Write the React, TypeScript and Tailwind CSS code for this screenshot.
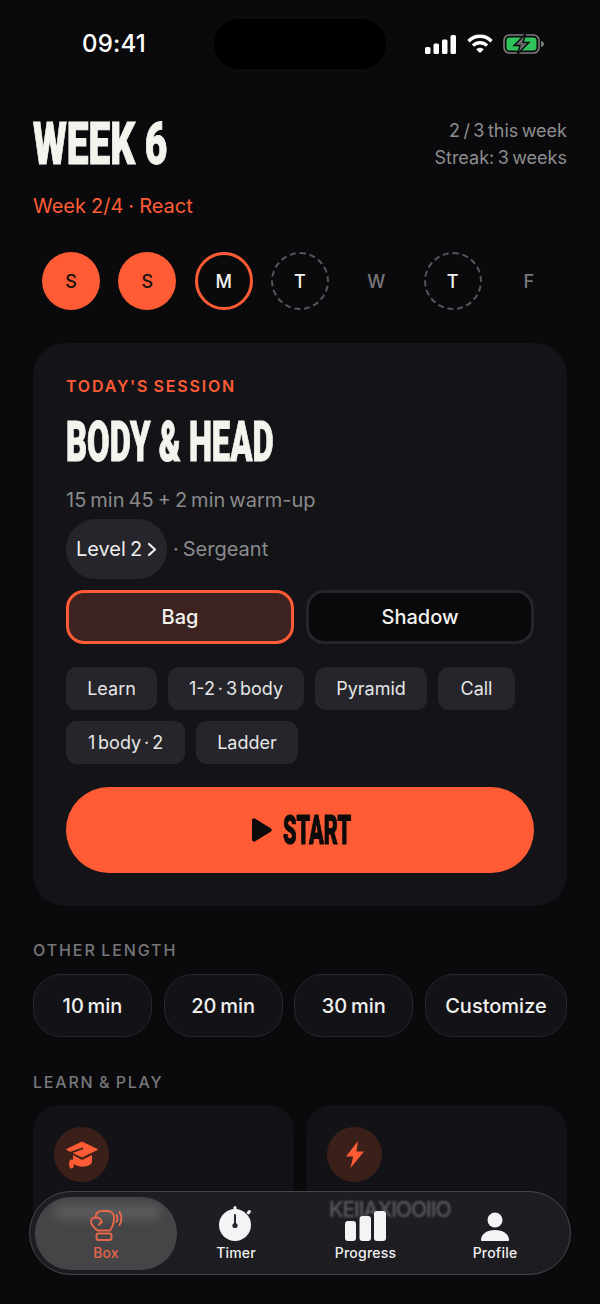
import React from "react";

const body = "font-['Inter','Noto_Sans',sans-serif] [word-spacing:-.1em]";
const display = "font-['Roboto','Liberation_Sans',sans-serif] font-black [word-spacing:0] [-webkit-text-stroke:1px_currentColor]";

function Signal() {
  return (
    <svg width="32" height="19" viewBox="0 0 32 19" fill="#fff">
      <rect x="0" y="12" width="5.5" height="7" rx="1.5" />
      <rect x="8.5" y="8.5" width="5.5" height="10.5" rx="1.5" />
      <rect x="17" y="4.5" width="5.5" height="14.5" rx="1.5" />
      <rect x="25.5" y="0" width="5.5" height="19" rx="1.5" />
    </svg>
  );
}

function Wifi() {
  return (
    <svg width="26" height="20" viewBox="0 0 26 20" fill="none" stroke="#fff" strokeWidth="3.4">
      <path d="M1.5 7.2C8 .6 18 .6 24.5 7.2" />
      <path d="M6 11.6c4-3.9 10-3.9 14 0" />
      <path d="M9.8 15.4 13 18.6l3.2-3.2c-1.8-1.6-4.6-1.6-6.4 0Z" fill="#fff" strokeWidth="1" />
    </svg>
  );
}

function Battery() {
  return (
    <svg width="42" height="20" viewBox="0 0 42 20">
      <rect x="1" y="1" width="35" height="18" rx="5.5" fill="none" stroke="#7b7b7b" strokeWidth="1.6" />
      <rect x="3.5" y="3.5" width="30" height="13" rx="3.2" fill="#2fc45a" />
      <path d="M38 7v6c1.8-.4 3-1.500 3-3s-1.200-2.600-3-3Z" fill="#7b7b7b" />
      <path d="M22.500 0 11 11.500h6L14.500 20 26 8.500h-6Z" fill="#6a6a6a" stroke="#0a0a0d" strokeWidth="1.400" />
    </svg>
  );
}

function Day({ l, kind }: { l: string; kind: "done" | "today" | "plan" | "off" }) {
  const cls =
    kind === "done"
      ? "bg-[#ff5c35] text-[#16110f]"
      : kind === "today"
        ? "border-[3px] border-[#ff5c35] text-[#f5f3ee]"
        : kind === "plan"
          ? "border-2 border-dashed border-[#55555a] text-[#f5f3ee]"
          : "text-[#77777b]";
  return (
    <div className="flex justify-center">
      <div className={`flex h-[58px] w-[58px] items-center justify-center rounded-full text-[18px] font-medium ${cls}`}>{l}</div>
    </div>
  );
}

function Chip({ children, w }: { children: React.ReactNode; w: string }) {
  return (
    <div className={`flex h-[43px] items-center justify-center rounded-[11px] bg-[#25252b] text-[18px] text-[#e6e6e6] [word-spacing:-.12em] ${w}`}>{children}</div>
  );
}

function Length({ children, w }: { children: React.ReactNode; w: string }) {
  return (
    <div className={`flex h-[63px] items-center justify-center rounded-[28px] border border-[#27272c] bg-[#131317] text-[20px] font-medium text-[#f0f0ee] ${w}`}>{children}</div>
  );
}

function Glove() {
  return (
    <svg width="33" height="31" viewBox="0 0 33 31" fill="none" stroke="#e8674a" strokeWidth="1.900" strokeLinecap="round" strokeLinejoin="round">
      <path d="M7.500 20.500C3 17 1 15 1 11.500c0-2.500 2-4.200 4.500-4C5.800 3.500 8.200 1 12 1h5.500c4 0 6.500 3 6.500 7 0 5-1.500 9-4 12.500Z" />
      <path d="M5.500 7.500c3 0 5.500 1.500 6.500 4.500-1.500.5-2.500 1.500-3 3" />
      <rect x="6.500" y="23.500" width="15" height="6.500" rx="2" />
      <path d="M26.500 5c1.200 2.200 1.200 4.800 0 7" />
      <path d="M29.500 2c2.200 3.800 2.200 9.200 0 13" />
    </svg>
  );
}

function Stopwatch() {
  return (
    <svg width="34" height="36" viewBox="0 0 34 36">
      <circle cx="16" cy="20" r="16" fill="#f4f4f6" />
      <rect x="14.500" y="1" width="3" height="5" rx="1.500" fill="#f4f4f6" />
      <rect x="28.500" y="5" width="3" height="4.500" rx="1.300" fill="#f4f4f6" transform="rotate(40 30 7)" />
      <rect x="15" y="9" width="2" height="12" rx="1" fill="#26262b" />
      <circle cx="16" cy="20.500" r="2.600" fill="#26262b" />
    </svg>
  );
}

function Bars() {
  return (
    <svg width="41" height="30" viewBox="0 0 41 30" fill="#f4f4f6">
      <rect x="0" y="10" width="11" height="20" rx="3" />
      <rect x="14.500" y="5" width="11.500" height="25" rx="3" />
      <rect x="29" y="0" width="12" height="30" rx="3" />
    </svg>
  );
}

function Person() {
  return (
    <svg width="28" height="29" viewBox="0 0 28 29" fill="#f4f4f6">
      <circle cx="14" cy="8" r="7.500" />
      <path d="M0 28c0-6 6-10 14-10s14 4 14 10c0 .6-.4 1-1 1H1c-.6 0-1-.4-1-1Z" />
    </svg>
  );
}

function NavItem({ icon, label, color, w }: { icon: React.ReactNode; label: string; color: string; w: string }) {
  return (
    <div className={`relative flex flex-col items-center ${w}`}>
      <div className="flex h-[37px] items-end">{icon}</div>
      <span className={`mt-[3px] text-[14px] leading-[18px] font-medium tracking-[.2px] ${color}`}>{label}</span>
    </div>
  );
}

export default function App() {
  return (
    <div className={`relative h-[1304px] w-[600px] overflow-hidden bg-[#0a0a0d] ${body}`}>
      {/* status bar */}
      <div className="flex items-center pt-[19px]">
        <div className="w-[214px] pl-[82px] text-[24px] leading-[50px] font-medium tracking-[.2px] text-white">09:41</div>
        <div className="h-[50px] w-[172px] rounded-[25px] bg-black" />
        <div className="flex items-center gap-[10px] pl-[39px]">
          <Signal />
          <Wifi />
          <Battery />
        </div>
      </div>

      <div className="px-[33px]">
        {/* header */}
        <div className="mt-[44px] flex items-start justify-between">
          <div className="h-[77px] pt-[1px]">
            <div className={`${display} origin-left scale-x-[.648] text-[60px] leading-[60px] whitespace-nowrap text-[#f5f3ee]`}>WEEK 6</div>
          </div>
          <div className="pt-[4px] text-right text-[18px] leading-[27px] text-[#8e8e8e] [word-spacing:-.09em]">
            <div>2 / 3 this week</div>
            <div>Streak: 3 weeks</div>
          </div>
        </div>
        <div className="mt-[2px] text-[20px] leading-[28px] text-[#ff5c35] [word-spacing:-.03em]">Week 2/4 · React</div>

        {/* week */}
        <div className="mt-[32px] grid grid-cols-7">
          <Day l="S" kind="done" />
          <Day l="S" kind="done" />
          <Day l="M" kind="today" />
          <Day l="T" kind="plan" />
          <Day l="W" kind="off" />
          <Day l="T" kind="plan" />
          <Day l="F" kind="off" />
        </div>

        {/* session card */}
        <div className="mt-[33px] h-[563px] rounded-[32px] bg-[#141418] px-[33px] pt-[33px]">
          <div className="text-[16px] leading-[20px] font-semibold tracking-[1.8px] text-[#ff5c35]">TODAY'S SESSION</div>
          <div className="mt-[17px] h-[58px]">
            <div className={`${display} origin-left scale-x-[.594] text-[55px] leading-[58px] whitespace-nowrap text-[#f5f3ee]`}>BODY &amp; HEAD</div>
          </div>
          <div className="mt-[15px] text-[20px] leading-[28px] text-[#8a8a8c]">15 min 45 + 2 min warm-up</div>
          <div className="mt-[5px] flex items-center">
            <div className="flex h-[60px] w-[101px] items-center justify-center gap-[5px] rounded-[30px] bg-[#25252b] text-[20px] text-[#ededed]">
              Level 2
              <svg width="10" height="15" viewBox="0 0 10 15" fill="none" stroke="#f2f2f2" strokeWidth="2.200" strokeLinecap="round" strokeLinejoin="round">
                <path d="m2 2 6 5.500L2 13" />
              </svg>
            </div>
            <span className="ml-[6px] text-[20px] text-[#8a8a8c]">· Sergeant</span>
          </div>
          <div className="mt-[11px] grid grid-cols-2 gap-[12px]">
            <div className="flex h-[54px] items-center justify-center rounded-[18px] border-[3px] border-[#ff5c35] bg-[#3c2220] text-[20px] font-medium text-[#f5f3ee]">Bag</div>
            <div className="flex h-[54px] items-center justify-center rounded-[18px] border-[3px] border-[#25252b] bg-[#09090c] text-[20px] font-medium text-[#f5f3ee]">Shadow</div>
          </div>
          <div className="mt-[23px] flex flex-wrap gap-x-[11px] gap-y-[11px]">
            <Chip w="w-[91px]">Learn</Chip>
            <Chip w="w-[136px]">1-2 · 3 body</Chip>
            <Chip w="w-[112px]">Pyramid</Chip>
            <Chip w="w-[77px]">Call</Chip>
            <Chip w="w-[119px]">1 body · 2</Chip>
            <Chip w="w-[102px]">Ladder</Chip>
          </div>
          <div className="mt-[23px] flex h-[86px] items-center justify-center gap-[11px] rounded-[43px] bg-[#ff5c35]">
            <svg width="20" height="24" viewBox="0 0 20 24" fill="#0d0b0a">
              <path d="M0 2.500C0 .8 1.800-.2 3.200.7l15.500 9.500c1.300.8 1.300 2.800 0 3.600L3.200 23.300C1.800 24.200 0 23.200 0 21.500Z" />
            </svg>
            <div className="h-[40px] w-[66px]">
              <div className={`${display} origin-left scale-x-[.53] text-[41px] leading-[40px] whitespace-nowrap text-[#0d0b0a]`}>START</div>
            </div>
          </div>
        </div>

        {/* other length */}
        <div className="mt-[34px] text-[16px] leading-[20px] font-medium tracking-[1.9px] text-[#77777a]">OTHER LENGTH</div>
        <div className="mt-[14px] flex justify-between">
          <Length w="w-[119px]">10 min</Length>
          <Length w="w-[119px]">20 min</Length>
          <Length w="w-[119px]">30 min</Length>
          <Length w="w-[142px]">Customize</Length>
        </div>

        {/* learn & play */}
        <div className="mt-[35px] text-[16px] leading-[20px] font-medium tracking-[1.8px] text-[#77777a]">LEARN &amp; PLAY</div>
        <div className="mt-[13px] grid grid-cols-2 gap-[12px]">
          <div className="h-[150px] rounded-[26px] bg-[#131317] pt-[22px] pl-[21px]">
            <div className="flex h-[55px] w-[55px] items-center justify-center rounded-full bg-[#3a2018]">
              <svg width="32" height="28" viewBox="0 0 32 28" fill="#ff5c35">
                <path d="M16 1 31.500 8.500 16 16 .5 8.500Z" stroke="#ff5c35" strokeLinejoin="round" />
                <path d="M7 14v6.500c0 3 4.500 5 9.500 5s9.500-2 9.500-5V14l-10 5Z" />
                <path d="M16.500 7.500 5.500 11.500V18" fill="none" stroke="#3a2018" strokeWidth="1.800" strokeLinecap="round" />
                <ellipse cx="5.500" cy="23" rx="2.400" ry="4.500" />
              </svg>
            </div>
          </div>
          <div className="h-[150px] rounded-[26px] bg-[#131317] pt-[22px] pl-[21px]">
            <div className="flex h-[55px] w-[55px] items-center justify-center rounded-full bg-[#3a2018]">
              <svg width="18" height="27" viewBox="0 0 18 27" fill="#ff5c35">
                <path d="M12 0 0 15.500h7.200L4.500 27 18 10.500h-7.500Z" />
              </svg>
            </div>
          </div>
        </div>
      </div>

      {/* tab bar */}
      <div className="absolute top-[1191px] left-[29px] flex h-[84px] w-[542px] items-center rounded-[42px] border border-[#46464a] bg-[#1f1f23]/90 pl-[5px]">
        <div className="absolute top-[6px] left-[299px] text-[21px] leading-[24px] font-medium tracking-[-1px] whitespace-nowrap text-[#5e5e62] blur-[1px]">KEIIAXIOOIIO</div>
        <div className="relative flex h-[73px] w-[142px] items-center justify-center rounded-[36px] bg-[#4a4a4c]/90">
          <div className="absolute top-[7px] left-[20px] h-[16px] w-[104px] bg-[#77777a]/40 blur-[4px]" />
          <NavItem w="w-[142px]" icon={<Glove />} label="Box" color="text-[#e8674a]" />
        </div>
        <NavItem w="w-[118px]" icon={<Stopwatch />} label="Timer" color="text-[#f0f0f0]" />
        <NavItem w="w-[141px]" icon={<Bars />} label="Progress" color="text-[#f0f0f0]" />
        <NavItem w="w-[118px]" icon={<Person />} label="Profile" color="text-[#f0f0f0]" />
      </div>
    </div>
  );
}
